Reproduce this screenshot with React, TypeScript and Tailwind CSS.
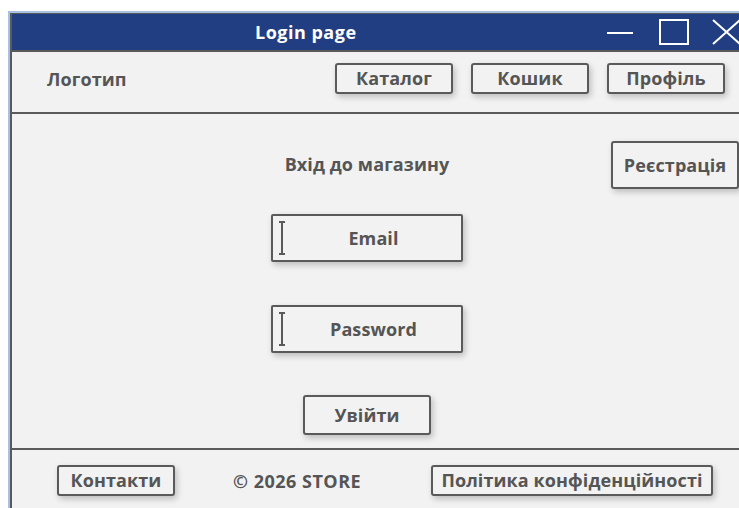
import React from 'react';

const font = { fontFamily: '"Open Sans", "Noto Sans", sans-serif' };

const btn =
  'flex items-center justify-center whitespace-nowrap rounded-[3px] border-2 border-[#5a5a5a] bg-[#f2f2f2] font-bold text-[#555555] shadow-[2px_3px_6px_rgba(0,0,0,0.22)]';

const Cursor: React.FC = () => (
  <svg width="8" height="34" viewBox="0 0 8 34" className="ml-[5px] shrink-0">
    <path d="M1 1h6M4 1v32M1 33h6" stroke="#5a5a5a" strokeWidth="2" fill="none" />
  </svg>
);

const Field: React.FC<{ label: string; className?: string }> = ({ label, className = '' }) => (
  <div className={`flex h-[48px] w-[192px] items-center rounded-[2px] border-2 border-[#5a5a5a] bg-[#f2f2f2] shadow-[2px_3px_6px_rgba(0,0,0,0.22)] ${className}`}>
    <Cursor />
    <span className="flex-1 text-center font-bold text-[#555555]">{label}</span>
  </div>
);

export default function App() {
  return (
    <div
      className="h-[508px] w-[739px] overflow-hidden bg-white pl-[8px] pt-[11px] text-[18px] tracking-[0.1px]"
      style={font}
    >
      <div className="w-[760px] border-l-2 border-t-2 border-[#a8c0e4]">
        <div className="flex flex-col border-l-2 border-t border-[#5a5a5a]">
          {/* title bar */}
          <div className="flex h-[36px] items-center bg-[#223e83] text-white">
            <span className="w-[595px] pl-[243px] font-bold tracking-[0.5px]">Login page</span>
            <svg width="26" height="4" className="mt-[1px] shrink-0">
              <path d="M0 2h26" stroke="white" strokeWidth="2" />
            </svg>
            <svg width="30" height="26" className="ml-[26px] shrink-0">
              <rect x="1" y="1" width="28" height="24" stroke="white" strokeWidth="2" fill="none" />
            </svg>
            <svg width="30" height="26" className="ml-[23px] shrink-0">
              <path d="M1 1l27 24M28 1L1 25" stroke="white" strokeWidth="2" fill="none" />
            </svg>
          </div>

          {/* header */}
          <div className="flex h-[64px] items-start border-y-2 border-[#5a5a5a] bg-[#f2f2f2] pl-[35px] pt-[11px]">
            <span className="mt-[3px] w-[288px] font-bold text-[#555555]">Логотип</span>
            <div className="flex gap-[18px]">
              <button className={`${btn} h-[31px] w-[118px]`}>Каталог</button>
              <button className={`${btn} h-[31px] w-[118px]`}>Кошик</button>
              <button className={`${btn} h-[31px] w-[118px]`}>Профіль</button>
            </div>
          </div>

          {/* login form */}
          <div className="flex h-[334px] items-start bg-[#f2f2f2] pl-[259px]">
            <div className="flex w-[192px] flex-col items-center pt-[38px]">
              <h1 className="whitespace-nowrap leading-[24px] font-bold text-[#555555]">Вхід до магазину</h1>
              <Field label="Email" className="mt-[38px]" />
              <Field label="Password" className="mt-[43px]" />
              <button className={`${btn} mt-[42px] h-[40px] w-[128px]`}>Увійти</button>
            </div>
            <button className={`${btn} ml-[148px] mt-[27px] h-[48px] w-[128px]`}>Реєстрація</button>
          </div>

          {/* footer */}
          <div className="flex h-[60px] items-start border-t-2 border-[#5a5a5a] bg-[#f2f2f2] pl-[45px] pt-[15px]">
            <button className={`${btn} h-[31px] w-[118px]`}>Контакти</button>
            <span className="ml-[58px] mt-[3px] w-[198px] whitespace-nowrap font-bold tracking-[0.5px] text-[#555555]">© 2026 STORE</span>
            <button className={`${btn} h-[31px] w-[282px]`}>Політика конфіденційності</button>
          </div>
        </div>
      </div>
    </div>
  );
}
